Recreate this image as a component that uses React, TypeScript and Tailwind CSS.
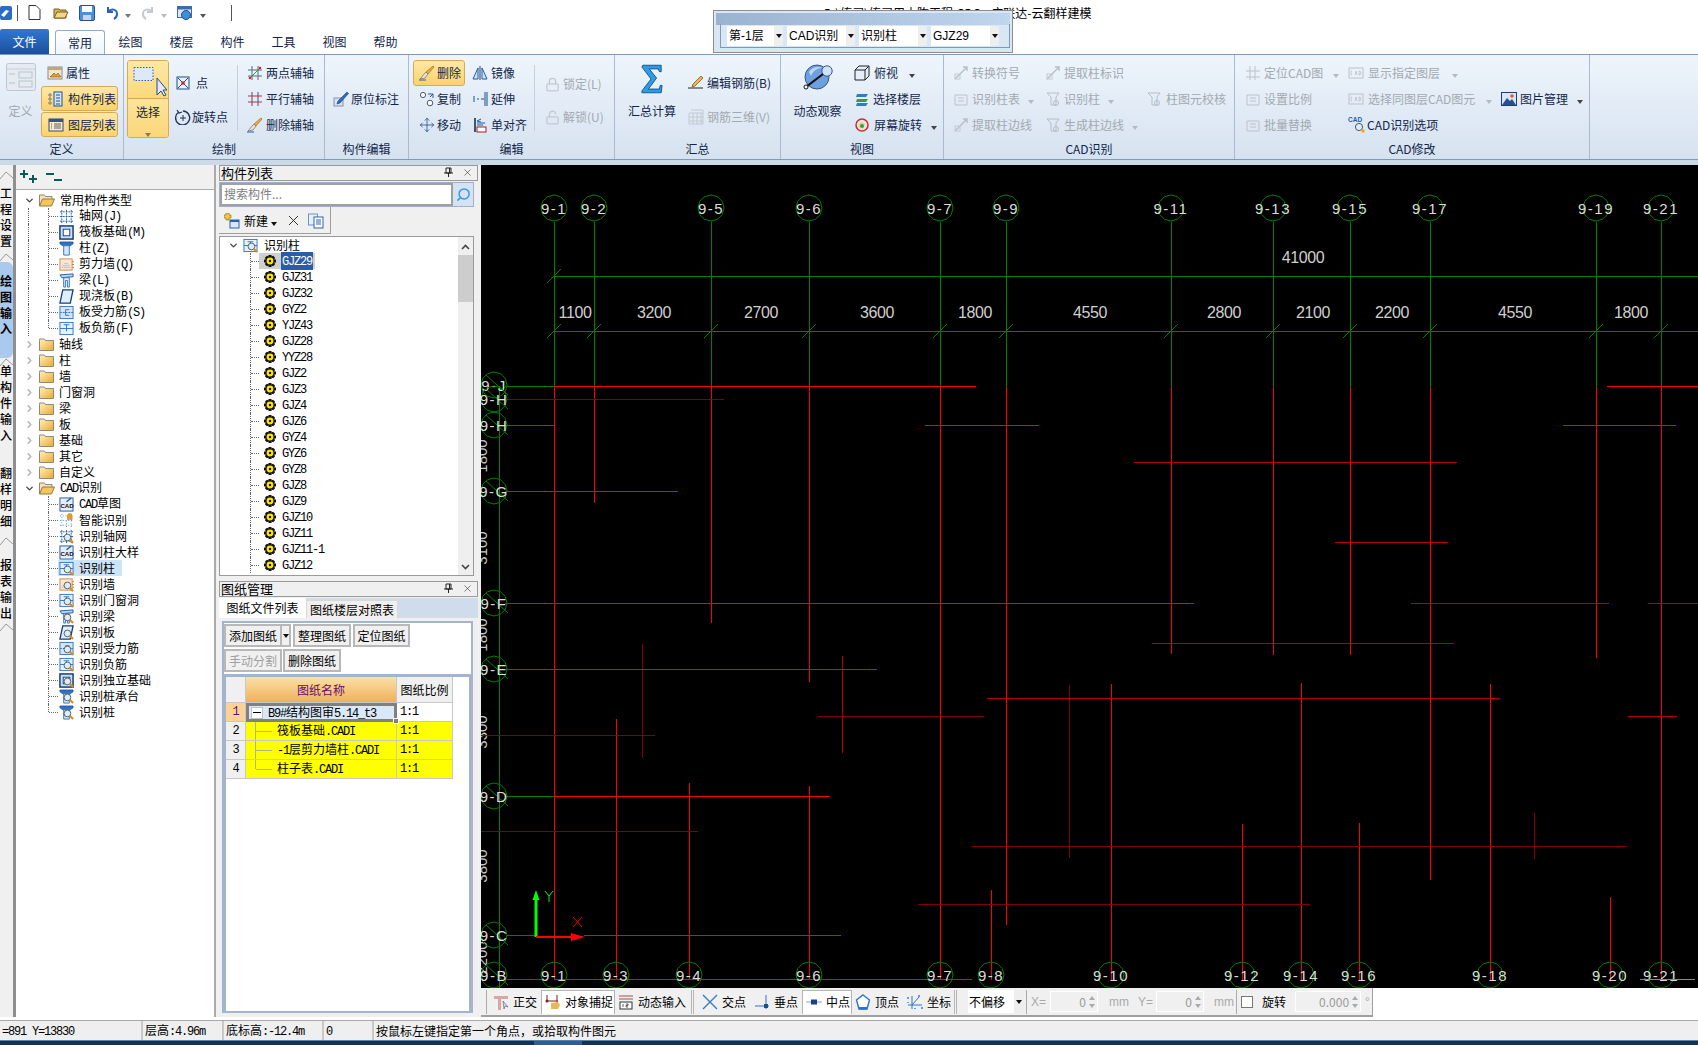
import type { ReactNode } from "react"
import { ChevronDown, ChevronRight, Lock, LockOpen, Move, Search, X } from "lucide-react"

const MONO = "font-['Liberation_Mono','Noto_Sans_CJK_SC',monospace] tracking-[-1.2px]"

function Sim({ text }: { text: string }) {
  const parts = text.split(/([\x00-\x7f]+)/).filter(Boolean)
  return (
    <span className="whitespace-nowrap">
      {parts.map((p, i) =>
        /^[\x00-\x7f]+$/.test(p) ? (
          <span key={i} className={MONO}>
            {p}
          </span>
        ) : (
          <span key={i}>{p}</span>
        ),
      )}
    </span>
  )
}

function Caret({ color = "border-t-[#444]" }: { color?: string }) {
  return <span className={`inline-block border-x-[3px] border-t-[4px] border-x-transparent ${color}`} />
}

function Ic({ s = 16, children }: { s?: number; children: ReactNode }) {
  return (
    <svg width={s} height={s} viewBox="0 0 16 16" fill="none" className="shrink-0">
      {children}
    </svg>
  )
}

/* ---------- ribbon icons ---------- */
const IProps = (
  <Ic>
    <rect x="1" y="2" width="14" height="12" fill="#f1e6cf" stroke="#8a8a8a" />
    <rect x="1" y="2" width="14" height="3" fill="#c9a56a" />
    <path d="M3 12l4-4 2 2 2-2 3 4z" fill="#e69a2e" stroke="#8a5a12" strokeWidth=".6" />
  </Ic>
)
const IList = (
  <Ic>
    <rect x="6" y="1" width="8" height="14" fill="#d4e4f7" stroke="#23518f" />
    <path d="M8 4h4M8 7h4M8 10h4M8 13h4" stroke="#23518f" />
    <path d="M1 3h2v2H1zM1 7h2v2H1zM1 11h2v2H1z" fill="#fff" stroke="#333" strokeWidth=".6" />
  </Ic>
)
const ILayer = (
  <Ic>
    <rect x="1" y="2" width="14" height="12" fill="#f8ecc4" stroke="#39496b" />
    <rect x="1" y="2" width="14" height="3" fill="#28569b" />
    <path d="M6 7h7M6 9h7M6 11h7M3 7h1M3 9h1M3 11h1" stroke="#56617a" />
  </Ic>
)
const IPoint = (
  <Ic>
    <rect x="2" y="2" width="12" height="12" fill="#e9f0f9" stroke="#1f4d8f" />
    <path d="M3 3l10 10M13 3L3 13" stroke="#1f4d8f" />
    <circle cx="8" cy="8" r="1.8" fill="#d32020" />
  </Ic>
)
const IRotatePt = (
  <Ic>
    <path d="M4 3a7 7 0 1 0 4-1" stroke="#1c3558" strokeWidth="1.4" />
    <path d="M2 1l2 3 3-1" stroke="#1c3558" strokeWidth="1.2" />
    <path d="M8 6v6M5 9h6" stroke="#1c3558" />
  </Ic>
)
const ITwoAxis = (
  <Ic>
    <path d="M5 1v14M11 1v14M1 5h14M1 11h14" stroke="#5b6b80" />
    <path d="M2 14L14 2" stroke="#2c9a35" />
    <circle cx="3" cy="13" r="1.3" fill="#c62a2a" />
    <circle cx="13" cy="3" r="1.3" fill="#c62a2a" />
  </Ic>
)
const IParallel = (
  <Ic>
    <path d="M5 1v14M11 1v14" stroke="#33548a" />
    <path d="M1 5h14M1 11h14" stroke="#c23030" />
  </Ic>
)
const IBrush = (
  <Ic>
    <path d="M14 1l1 1-6 7-2-2z" fill="#f0b23c" stroke="#8a5b10" strokeWidth=".6" />
    <path d="M7 7l2 2-3 4-5 1c2-2 3-4 6-7z" fill="#e8e4dc" stroke="#555" strokeWidth=".6" />
    <path d="M0 15h7" stroke="#2b5aa0" />
  </Ic>
)
const IAnno = (
  <Ic>
    <rect x="1" y="7" width="9" height="8" fill="#d7e3f2" stroke="#7f93ae" />
    <path d="M14 1l1.5 1.5L7 12l-3 1 1-3z" fill="#2f6dbb" stroke="#173c72" strokeWidth=".6" />
  </Ic>
)
const IMirror = (
  <Ic>
    <path d="M8 1v14" stroke="#1d3d6f" />
    <path d="M6 3v11H1z" fill="#d4e4f7" stroke="#1f5ba8" />
    <path d="M10 3v11h5z" fill="#d4e4f7" stroke="#1f5ba8" />
  </Ic>
)
const ICopy = (
  <Ic>
    <circle cx="4" cy="4" r="2.6" fill="#fff" stroke="#4c5a6e" />
    <circle cx="11" cy="12" r="2.8" fill="#fff" stroke="#4c5a6e" />
    <path d="M9 3h5v4M14 3l-3 3" stroke="#1f5ba8" />
  </Ic>
)
const IExtend = (
  <Ic>
    <path d="M13 1v14M15 1v14" stroke="#1f4d8f" />
    <path d="M1 8h2M5 8h2M9 8h3M1 6h2M1 10h2" stroke="#1f4d8f" />
  </Ic>
)
const IAlign = (
  <Ic>
    <path d="M3 1v14" stroke="#1a2c52" strokeWidth="1.6" />
    <rect x="5" y="10" width="9" height="5" fill="#fff" stroke="#a51c1c" />
    <path d="M5 6h8M5 8h6" stroke="#1f5ba8" />
    <path d="M9 2L5 4l4 1" stroke="#1f5ba8" />
  </Ic>
)
const ISelect = (
  <svg width="34" height="32" viewBox="0 0 34 32" className="shrink-0">
    <rect x="1" y="1.5" width="19" height="13" fill="#dce9f8" stroke="#2c5fae" strokeDasharray="1.5 1.5" />
    <path d="M24 12v17l4-4 3 5 2-1-3-5h4z" fill="#dfe9f7" stroke="#25488a" />
  </svg>
)
const IDefine = (
  <svg width="30" height="28" viewBox="0 0 30 28" className="shrink-0">
    <rect x=".5" y=".5" width="29" height="27" rx="2" fill="#e6ebf1" stroke="#c0c6ce" />
    <path d="M1 6h28" stroke="#c8ced6" />
    <path d="M3 11h6M3 20h6" stroke="#bcc3cc" />
    <rect x="13" y="9" width="13" height="6" fill="none" stroke="#bcc3cc" />
    <rect x="13" y="18" width="13" height="6" fill="none" stroke="#bcc3cc" />
  </svg>
)
const ISigma = (
  <svg width="22" height="30" viewBox="0 0 24 32" className="shrink-0">
    <path d="M2 1h20v7h-2l-1-3H9l8 10-9 12h12l1-4h2l-1 8H1v-2l10-13L1 3z" fill="#2f9be0" stroke="#0f4f94" strokeWidth="1" />
  </svg>
)
const IEditBar = (
  <Ic>
    <path d="M0 13h15" stroke="#222" />
    <path d="M13 1l2 2-8 8-3 1 1-3z" fill="#efb74c" stroke="#6b4a14" strokeWidth=".7" />
  </Ic>
)
const IRebar3d = (
  <Ic>
    <path d="M1 4h14v11H1zM1 8h14M1 12h14M5 4v11M9 4v11M13 4v11M3 1h12v3" stroke="#bfc6cf" strokeWidth=".9" />
  </Ic>
)
const IOrbit = (
  <svg width="30" height="28" viewBox="0 0 30 28" className="shrink-0">
    <circle cx="14" cy="14" r="12" fill="#6f9fdc" stroke="#31578f" />
    <path d="M6 9c3-5 9-6 13-4-5 0-9 3-11 8z" fill="#bcd6f4" />
    <circle cx="24" cy="8" r="5.2" fill="#cfe2f7" stroke="#31578f" />
    <path d="M3 24L20 11" stroke="#111" strokeWidth="2.2" />
    <circle cx="3" cy="24" r="2" fill="#fff" stroke="#111" />
  </svg>
)
const ICube = (
  <Ic>
    <path d="M1 5l4-4h10v10l-4 4H1zM1 5h10v10M11 5l4-4" fill="#e5eef9" stroke="#222" />
  </Ic>
)
const IFloors = (
  <Ic>
    <path d="M3 3h11L12 6H2z" fill="#2f7dc0" />
    <path d="M3 8h11l-2 3H2z" fill="#2e9e5b" />
    <path d="M3 12h11l-2 3H2z" fill="#2f7dc0" />
  </Ic>
)
const IScreenRot = (
  <Ic>
    <circle cx="8" cy="8" r="6" stroke="#d42a2a" strokeWidth="1.5" />
    <path d="M4 9l3-4 4 2-2 5z" fill="#f0d24a" />
    <circle cx="8" cy="9" r="2" fill="#3aa34a" />
  </Ic>
)
const GraySquare = (
  <Ic>
    <path d="M2 14L14 2M10 2h4v4" stroke="#b7bdc6" strokeWidth="1.4" />
    <rect x="2" y="9" width="5" height="5" stroke="#c4cad2" />
  </Ic>
)
const GrayCol = (
  <Ic>
    <path d="M2 2h12l-3 4v8H6V6z" stroke="#b7bdc6" />
    <circle cx="11" cy="12" r="2.5" stroke="#b7bdc6" />
  </Ic>
)
const GrayDoc = (
  <Ic>
    <path d="M2 4h12v10H2zM5 7h6M5 10h6" stroke="#bcc2ca" />
  </Ic>
)
const GrayCad = (
  <Ic>
    <rect x="1" y="3" width="14" height="10" stroke="#bcc2ca" />
    <path d="M4 6H3v4h1M7 10l1-4 1 4M11 6h1l1 2-1 2h-1z" stroke="#bcc2ca" strokeWidth=".8" />
  </Ic>
)
const IPicture = (
  <Ic>
    <rect x=".5" y="1.5" width="15" height="13" fill="#dbe6f3" stroke="#1d3f72" />
    <path d="M1 14l5-7 3 3 2-2 4 6z" fill="#27508f" />
    <circle cx="11" cy="5" r="1.8" fill="#e25a2a" />
  </Ic>
)
const ICadGlass = (
  <svg width="18" height="18" viewBox="0 0 18 18" className="shrink-0">
    <text x="0" y="6" fontSize="6.5" fontWeight="700" fill="#1f5ba8" fontFamily="Liberation Sans">
      CAD
    </text>
    <circle cx="11" cy="11" r="3.6" fill="#d7effa" stroke="#555" />
    <rect x="13.5" y="13.5" width="3" height="3" fill="#f2a31b" />
  </svg>
)
const ITwoAxisGray = (
  <Ic>
    <path d="M5 1v14M10 1v14M1 6h14M1 12h14" stroke="#bcc2ca" />
  </Ic>
)

/* ---------- ribbon pieces ---------- */
function RItem({
  icon,
  label,
  off,
  arrow,
  gap = "gap-[3px]",
}: {
  icon: ReactNode
  label: string
  off?: boolean
  arrow?: string
  gap?: string
}) {
  return (
    <div className={`flex h-[26px] items-center ${gap} whitespace-nowrap ${off ? "text-[#a3a9b1]" : "text-[#12264a]"}`}>
      {icon}
      <span>{label}</span>
      {arrow && (
        <span className={arrow}>
          <Caret color={off ? "border-t-[#b5bac1]" : "border-t-[#444]"} />
        </span>
      )}
    </div>
  )
}

function Group({ w, label, children, grow }: { w?: string; label: string; children: ReactNode; grow?: boolean }) {
  return (
    <div className={`flex flex-col ${w ?? ""} ${grow ? "" : "border-r border-[#a8bbd2]"} shrink-0`}>
      <div className="flex h-[85px] pt-[5px]">{children}</div>
      <div className="h-[19px] text-center leading-[17px] text-[#12264a]">{label}</div>
    </div>
  )
}

function OrangeBtn({ icon, label }: { icon: ReactNode; label: string }) {
  return (
    <div className="flex h-[25px] w-[77px] items-center gap-[4px] rounded-[3px] border border-[#d8ab51] bg-gradient-to-b from-[#fee8a6] to-[#fbd26c] pl-[6px] text-[#12264a]">
      {icon}
      <span>{label}</span>
    </div>
  )
}

function Sep() {
  return <div className="mt-[5px] h-[66px] w-px shrink-0 bg-[#c3d0df]" />
}

function Ribbon() {
  return (
    <div className="flex h-[106px] shrink-0 border-y border-[#7f9bb9] bg-gradient-to-b from-[#eef5fc] to-[#d6e2f0] text-[12px]">
      <Group w="w-[124px]" label="定义">
        <div className="flex w-[41px] flex-col items-center pt-[3px] text-[#a3a9b1]">
          {IDefine}
          <span className="mt-[11px]">定义</span>
        </div>
        <div className="flex flex-col">
          <div className="pl-[6px]">
            <RItem icon={IProps} label="属性" />
          </div>
          <OrangeBtn icon={IList} label="构件列表" />
          <div className="mt-px">
            <OrangeBtn icon={ILayer} label="图层列表" />
          </div>
        </div>
      </Group>

      <Group w="w-[201px]" label="绘制">
        <div className="ml-[3px] flex h-[78px] w-[42px] flex-col overflow-hidden rounded-[3px] border border-[#d8ab51] text-[#12264a]">
          <div className="flex h-[41px] items-start justify-center bg-gradient-to-b from-[#fee8a6] to-[#fcd87a] pt-[5px] pl-[4px]">{ISelect}</div>
          <div className="flex flex-1 flex-col items-center border-t border-[#d8ab51] bg-gradient-to-b from-[#fde39b] to-[#fbd575]">
            <span className="mt-[4px]">选择</span>
            <span className="mt-[2px]">
              <Caret color="border-t-[#8a7a50]" />
            </span>
          </div>
        </div>
        <div className="ml-[6px] flex w-[62px] flex-col gap-[8px] pt-[10px]">
          <RItem icon={IPoint} label="点" gap="gap-[5px]" />
          <RItem icon={IRotatePt} label="旋转点" gap="gap-px" />
        </div>
        <Sep />
        <div className="ml-[9px] flex flex-col">
          <RItem icon={ITwoAxis} label="两点辅轴" />
          <RItem icon={IParallel} label="平行辅轴" />
          <RItem icon={IBrush} label="删除辅轴" />
        </div>
      </Group>

      <Group w="w-[84px]" label="构件编辑">
        <div className="ml-[8px] pt-[26px]">
          <RItem icon={IAnno} label="原位标注" gap="gap-[2px]" />
        </div>
      </Group>

      <Group w="w-[206px]" label="编辑">
        <div className="ml-[4px] flex w-[52px] flex-col">
          <div className="flex h-[26px] items-center gap-[2px] rounded-[3px] border border-[#d8ab51] bg-gradient-to-b from-[#fee8a6] to-[#fbd26c] pl-[5px] text-[#12264a]">
            {IBrush}
            <span>删除</span>
          </div>
          <div className="pl-[6px]">
            <RItem icon={ICopy} label="复制" gap="gap-[2px]" />
            <RItem icon={<Move size={16} strokeWidth={1.2} className="shrink-0 text-[#1f4d8f]" />} label="移动" gap="gap-[2px]" />
          </div>
        </div>
        <div className="ml-[7px] flex w-[62px] flex-col">
          <RItem icon={IMirror} label="镜像" />
          <RItem icon={IExtend} label="延伸" />
          <RItem icon={IAlign} label="单对齐" />
        </div>
        <Sep />
        <div className="ml-[10px] flex flex-col gap-[7px] pt-[11px]">
          <RItem off icon={<Lock size={15} className="shrink-0 text-[#c4c9d0]" />} label="锁定(L)" />
          <RItem off icon={<LockOpen size={15} className="shrink-0 text-[#c4c9d0]" />} label="解锁(U)" />
        </div>
      </Group>

      <Group w="w-[166px]" label="汇总">
        <div className="ml-[9px] flex w-[56px] flex-col items-center pt-[4px] text-[#12264a]">
          {ISigma}
          <span className="mt-[8px]">汇总计算</span>
        </div>
        <div className="ml-[8px] flex flex-col gap-[8px] pt-[10px]">
          <RItem icon={IEditBar} label="编辑钢筋(B)" />
          <RItem off icon={IRebar3d} label="钢筋三维(V)" />
        </div>
      </Group>

      <Group w="w-[163px]" label="视图">
        <div className="ml-[9px] flex w-[55px] flex-col items-center pt-[3px] text-[#12264a]">
          {IOrbit}
          <span className="mt-[11px]">动态观察</span>
        </div>
        <div className="ml-[9px] flex flex-col">
          <RItem icon={ICube} label="俯视" arrow="ml-[7px]" gap="gap-[4px]" />
          <RItem icon={IFloors} label="选择楼层" gap="gap-[3px]" />
          <RItem icon={IScreenRot} label="屏幕旋转" arrow="ml-[5px]" gap="gap-[4px]" />
        </div>
      </Group>

      <Group w="w-[291px]" label="CAD识别">
        <div className="ml-[9px] flex w-[92px] flex-col">
          <RItem off icon={GraySquare} label="转换符号" />
          <RItem off icon={GrayDoc} label="识别柱表" arrow="ml-[5px]" />
          <RItem off icon={GraySquare} label="提取柱边线" />
        </div>
        <div className="flex w-[101px] flex-col">
          <RItem off icon={GraySquare} label="提取柱标识" />
          <RItem off icon={GrayCol} label="识别柱" arrow="ml-[5px]" />
          <RItem off icon={GrayCol} label="生成柱边线" arrow="ml-[5px]" />
        </div>
        <div className="pt-[26px]">
          <RItem off icon={GrayCol} label="柱图元校核" gap="gap-[4px]" />
        </div>
      </Group>

      <Group w="w-[355px]" label="CAD修改">
        <div className="ml-[10px] flex w-[103px] flex-col">
          <RItem off icon={ITwoAxisGray} label="定位CAD图" arrow="ml-[7px]" />
          <RItem off icon={GrayDoc} label="设置比例" />
          <RItem off icon={GrayDoc} label="批量替换" />
        </div>
        <div className="flex w-[153px] flex-col">
          <RItem off icon={GrayCad} label="显示指定图层" arrow="ml-[8px]" gap="gap-[4px]" />
          <RItem off icon={GrayCad} label="选择同图层CAD图元" arrow="ml-[7px]" gap="gap-[4px]" />
          <RItem icon={ICadGlass} label="CAD识别选项" gap="gap-[1px]" />
        </div>
        <div className="pt-[26px]">
          <RItem icon={IPicture} label="图片管理" arrow="ml-[6px]" gap="gap-[3px]" />
        </div>
      </Group>
      <div className="flex-1" />
    </div>
  )
}

function TitleBar() {
  return (
    <div className="flex h-[29px] shrink-0 items-center bg-white pb-[4px] text-[12px] text-black">
      <div className="flex w-[232px] shrink-0 items-center">
        <svg width="12" height="14" viewBox="0 0 12 14">
          <rect width="12" height="14" rx="2" fill="#2b6cc4" />
          <path d="M1 9l5-5 3 1-5 6z" fill="#fff" />
        </svg>
        <div className="ml-[5px] h-[16px] w-px bg-[#555]" />
        <div className="ml-[9px] flex w-[15px] justify-center">
          <svg width="13" height="15" viewBox="0 0 13 15">
            <path d="M1 .5h7l4 4v10H1z" fill="#fff" stroke="#333" />
          </svg>
        </div>
        <div className="ml-[11px]">
          <svg width="16" height="15" viewBox="0 0 16 15">
            <path d="M1 4h5l1 1h6v8H1z" fill="#d9b25a" stroke="#7c5d1e" />
            <path d="M1 13l3-6h11l-3 6z" fill="#f4d68a" stroke="#7c5d1e" />
          </svg>
        </div>
        <div className="ml-[10px]">
          <svg width="16" height="16" viewBox="0 0 16 16">
            <rect x=".5" y=".5" width="15" height="15" rx="1.5" fill="#4f8fd6" stroke="#27528c" />
            <rect x="3" y="1" width="10" height="6" fill="#fff" />
            <rect x="4" y="10" width="8" height="5" fill="#c9d6e6" />
          </svg>
        </div>
        <div className="ml-[10px]">
          <svg width="14" height="14" viewBox="0 0 14 14" fill="none">
            <path d="M3 1v5h5M3 6c3-4 9-3 9 2 0 2-1 4-3 5" stroke="#2a63b5" strokeWidth="2" />
          </svg>
        </div>
        <span className="ml-[6px]">
          <Caret color="border-t-[#777]" />
        </span>
        <div className="ml-[10px]">
          <svg width="14" height="14" viewBox="0 0 14 14" fill="none">
            <path d="M11 1v5H6M11 6C8 2 2 3 2 8c0 2 1 4 3 5" stroke="#c4cad1" strokeWidth="2" />
          </svg>
        </div>
        <span className="ml-[6px]">
          <Caret color="border-t-[#bbb]" />
        </span>
        <div className="ml-[10px]">
          <svg width="17" height="16" viewBox="0 0 17 16">
            <rect x=".5" y="1.5" width="14" height="11" fill="#dbe8f7" stroke="#3f6ca8" />
            <rect x=".5" y="1.5" width="14" height="3" fill="#3f6ca8" />
            <circle cx="9" cy="10" r="4.5" fill="#3f8ed6" stroke="#1d4f8e" />
          </svg>
        </div>
        <span className="ml-[6px]">
          <Caret color="border-t-[#555]" />
        </span>
        <div className="ml-auto h-[16px] w-px bg-[#555]" />
      </div>
      <div className="ml-[592px] whitespace-nowrap">D:\练习\练习用土陈工程.GDQ - 广联达-云翻样建模</div>
    </div>
  )
}

function Tabs() {
  const names = ["绘图", "楼层", "构件", "工具", "视图", "帮助"]
  return (
    <div className="flex h-[25px] shrink-0 items-end bg-white text-[12px] text-[#12264a]">
      <div className="flex h-[25px] w-[49px] items-center justify-center rounded-t-[2px] bg-gradient-to-b from-[#2f78d2] to-[#1d4f9d] text-white">文件</div>
      <div className="ml-[6px] flex h-[24px] w-[50px] items-center justify-center rounded-t-[3px] border-x border-t border-[#92acc8] bg-gradient-to-b from-white to-[#eef5fc]">常用</div>
      {names.map((n) => (
        <div key={n} className="flex h-[24px] w-[51px] items-center justify-center">
          {n}
        </div>
      ))}
    </div>
  )
}

/* ---------- tree icons ---------- */
const FolderClosed = (
  <svg width="15" height="13" viewBox="0 0 15 13" className="shrink-0">
    <defs>
      <linearGradient id="fold" x1="0" y1="0" x2="1" y2="1">
        <stop offset="0" stopColor="#fff3c0" />
        <stop offset="1" stopColor="#eda92c" />
      </linearGradient>
    </defs>
    <path d="M.5 2.5V1h5l1 1.5h8v10H.5z" fill="url(#fold)" stroke="#8a8a80" />
  </svg>
)
const FolderOpen = (
  <svg width="16" height="13" viewBox="0 0 16 13" className="shrink-0">
    <path d="M.5 12V1h5l1 1.5H13V5" fill="#f6e6b6" stroke="#8a8a80" />
    <path d="M.5 12l3-7h12l-3 7z" fill="#f6c65b" stroke="#8a7a50" />
  </svg>
)
const Blue = "#1f58a6"
const TreeGlyph: Record<string, ReactNode> = {
  grid: <path d="M1 3h14M1 8h14M1 13h14M3 1v14M8 1v14M13 1v14" stroke={Blue} strokeDasharray="2 1" />,
  raft: (
    <>
      <rect x="1" y="1" width="14" height="14" fill="#cfe0f5" stroke="#123f80" strokeWidth="1.6" />
      <rect x="4.5" y="4.5" width="7" height="7" fill="#fff" stroke="#123f80" />
    </>
  ),
  col: (
    <>
      <path d="M1 1h14v2l-3 2H4L1 3z" fill="#2f74c8" stroke="#123f80" strokeWidth=".7" />
      <path d="M5 5h6v10H5z" fill="#d8e7f8" stroke="#2f74c8" />
    </>
  ),
  wall: (
    <>
      <rect x="1" y="2" width="13" height="12" fill="#f3e7d9" stroke="#d48a4a" />
      <path d="M3 11h9M4 9h7M6 7h4" stroke="#9a9a9a" strokeDasharray="1 1" />
      <path d="M14 5h2M14 8h2M14 11h2" stroke="#d47a2a" />
    </>
  ),
  beam: (
    <>
      <path d="M1 2l14-1v3L3 5z" fill="#bcd6f4" stroke={Blue} />
      <path d="M5 5h6v10H9V8H7v7H5z" fill="#e5f0fb" stroke="#2f74c8" />
    </>
  ),
  slab: <path d="M4 1h11l-3 14H1z" fill="#e3eefb" stroke="#123f80" strokeWidth="1.4" />,
  rebar: (
    <>
      <rect x="1" y="1.5" width="14" height="13" fill="#d5e5f8" stroke="#2f74c8" />
      <path d="M1 8h14" stroke="#2f74c8" strokeDasharray="2 1" />
      <path d="M11 5H7v6h4" stroke="#2f74c8" />
    </>
  ),
  neg: (
    <>
      <rect x="1" y="1.5" width="14" height="13" fill="#e8f0fa" stroke="#2f74c8" />
      <path d="M1 8h14M8 4v7M5 4h6" stroke="#2f74c8" />
    </>
  ),
  cad: (
    <>
      <rect x="1" y="1" width="14" height="14" fill="#e5eefa" stroke={Blue} />
      <text x="1.5" y="12" fontSize="6.5" fontWeight="700" fill="#111" fontFamily="Liberation Sans">
        CAD
      </text>
      <path d="M8 5l5-4" stroke={Blue} strokeWidth="1.4" />
    </>
  ),
  magnet: (
    <>
      <path d="M1 3h7M1 8h14M1 13h14M3 1v14M8 8v7M13 8v7" stroke="#4c86cf" strokeDasharray="1 2" />
      <path d="M9 7V3a2.5 2.5 0 0 1 5 0v4h-2V3.5a.6.6 0 0 0-1 0V7z" fill="#f2a31b" stroke="#9a5d08" strokeWidth=".5" />
    </>
  ),
}

function Glass() {
  return (
    <>
      <circle cx="9" cy="9" r="3.6" fill="#d9eefa" stroke="#5a5a5a" />
      <path d="M11.5 11.5L15 15" stroke="#d98a1c" strokeWidth="2.2" />
    </>
  )
}

const TreeIcon = ({ k, glass }: { k: string; glass?: boolean }) => (
  <svg width="15" height="15" viewBox="0 0 16 16" fill="none" className="shrink-0">
    {TreeGlyph[k]}
    {glass && <Glass />}
  </svg>
)

function Dot({ h = "h-full", self = "" }: { h?: string; self?: string }) {
  return <span className={`${h} ${self} w-0 border-l border-dotted border-[#666]`} />
}

function ParentRow({ label, open, line }: { label: string; open?: boolean; line?: boolean }) {
  return (
    <div className="relative flex h-4 items-center pl-[8px] text-black">
      {open ? <ChevronDown size={11} strokeWidth={3} className="shrink-0 text-[#444]" /> : <ChevronRight size={11} strokeWidth={3} className="shrink-0 text-[#b0b0b0]" />}
      <span className="ml-[4px]">{open ? FolderOpen : FolderClosed}</span>
      <span className="ml-[5px]">
        <Sim text={label} />
      </span>
      {line && <span className="absolute top-[12px] left-[13px] h-[5px] border-l border-dotted border-[#666]" />}
    </div>
  )
}

function ChildRow({ k, glass, label, outer, last, sel }: { k: string; glass?: boolean; label: string; outer?: boolean; last?: boolean; sel?: boolean }) {
  return (
    <div className="flex h-4 items-center text-black">
      <span className="flex h-full w-[13px] justify-end">{outer && <Dot />}</span>
      <span className="w-[19px]" />
      {last ? <Dot h="h-1/2" self="self-start" /> : <Dot />}
      <span className="w-[9px] border-t border-dotted border-[#666]" />
      <span className={`flex h-full items-center ${sel ? "w-[64px] bg-[#cce4f7] pl-[1px]" : "pl-[1px]"}`}>
        <TreeIcon k={k} glass={glass} />
        <span className="ml-[5px]">
          <Sim text={label} />
        </span>
      </span>
    </div>
  )
}

function TreePanel() {
  const common: [string, string][] = [
    ["grid", "轴网(J)"],
    ["raft", "筏板基础(M)"],
    ["col", "柱(Z)"],
    ["wall", "剪力墙(Q)"],
    ["beam", "梁(L)"],
    ["slab", "现浇板(B)"],
    ["rebar", "板受力筋(S)"],
    ["neg", "板负筋(F)"],
  ]
  const cad: [string, string, boolean][] = [
    ["cad", "CAD草图", false],
    ["magnet", "智能识别", false],
    ["grid", "识别轴网", true],
    ["cad", "识别柱大样", false],
    ["neg", "识别柱", true],
    ["wall", "识别墙", true],
    ["neg", "识别门窗洞", true],
    ["beam", "识别梁", true],
    ["slab", "识别板", true],
    ["rebar", "识别受力筋", true],
    ["neg", "识别负筋", true],
    ["raft", "识别独立基础", true],
    ["col", "识别桩承台", true],
    ["col", "识别桩", true],
  ]
  const folders = ["轴线", "柱", "墙", "门窗洞", "梁", "板", "基础", "其它", "自定义"]
  return (
    <div className="flex h-full w-[200px] shrink-0 flex-col border-r-2 border-[#aaa] bg-white text-[12px]">
      <div className="flex h-[25px] shrink-0 items-center gap-[8px] border-b border-[#aaa] bg-[#f0f0f0] pl-[4px]">
        <svg width="18" height="14" viewBox="0 0 18 14" fill="none">
          <path d="M4 0v8M0 4h8M13 5v8M9 9h8" stroke="#0a5a5a" strokeWidth="2" />
        </svg>
        <svg width="16" height="10" viewBox="0 0 16 10" fill="none">
          <path d="M0 2h8M8 8h8" stroke="#0a5a5a" strokeWidth="2" />
        </svg>
      </div>
      <div className="pt-[2px]">
        <ParentRow label="常用构件类型" open />
        {common.map(([k, l], i) => (
          <ChildRow key={l} k={k} label={l} outer last={i === common.length - 1} />
        ))}
        {folders.map((f) => (
          <ParentRow key={f} label={f} />
        ))}
        <ParentRow label="CAD识别" open />
        {cad.map(([k, l, g], i) => (
          <ChildRow key={l} k={k} label={l} glass={g} last={i === cad.length - 1} sel={l === "识别柱"} />
        ))}
      </div>
    </div>
  )
}

/* ---------- component list ---------- */
function PaneHead({ title }: { title: string }) {
  return (
    <div className="flex h-[16px] shrink-0 items-center border border-[#9a9a9a] bg-[#f0f0f0] pb-[2px] text-[13px] leading-none text-black">
      <span className="flex-1 pl-px">{title}</span>
      <svg width="9" height="10" viewBox="0 0 9 10" className="mr-[9px]" fill="none">
        <path d="M2 1h5v5H2zM0 6h9M4.5 6v4M5.5 1v5" stroke="#222" />
      </svg>
      <X size={11} strokeWidth={1.3} className="mr-[4px] text-[#333]" />
    </div>
  )
}

const Gear = (
  <svg width="12" height="12" viewBox="0 0 12 12" className="shrink-0">
    <path d="M4.5 0h3v1.6l1.6-.9 2 2-.9 1.8H12v3h-1.8l.9 1.8-2 2-1.6-.9V12h-3v-1.6l-1.6.9-2-2 .9-1.8H0v-3h1.8L.9 2.7l2-2 1.6.9z" fill="#111" />
    <circle cx="6" cy="6" r="3.4" fill="#ffe600" />
    <circle cx="6" cy="6" r="1.2" fill="#111" />
  </svg>
)

function ComponentList() {
  const rows = ["GJZ29", "GJZ31", "GJZ32", "GYZ2", "YJZ43", "GJZ28", "YYZ28", "GJZ2", "GJZ3", "GJZ4", "GJZ6", "GYZ4", "GYZ6", "GYZ8", "GJZ8", "GJZ9", "GJZ10", "GJZ11", "GJZ11-1", "GJZ12"]
  return (
    <>
      <PaneHead title="构件列表" />
      <div className="mt-px flex h-[25px] w-[255px] shrink-0 border border-[#9db1c8]">
        <div className="flex-1 border-2 border-[#a0a0a0] bg-white pl-[2px] leading-[17px] text-[#808080]">搜索构件...</div>
        <div className="flex w-[20px] items-center justify-center bg-[#d3e3f4]">
          <Search size={15} strokeWidth={2.4} className="-scale-x-100 text-[#3d96e0]" />
        </div>
      </div>
      <div className="flex h-[27px] w-[112px] shrink-0 items-center border-r border-b border-[#a0a0a0] bg-[#f0f0f0] pt-px pl-[5px] text-black">
        <svg width="16" height="16" viewBox="0 0 16 16">
          <path d="M2 0h3v2h2v3H5v2H2V5H0V2h2z" fill="#f2c83c" stroke="#8a6a10" strokeWidth=".6" />
          <rect x="6" y="7" width="9" height="8" fill="#d9e7f7" stroke="#2a62ad" />
          <rect x="6" y="7" width="9" height="2" fill="#2a62ad" />
        </svg>
        <span className="ml-[4px]">新建</span>
        <span className="ml-[3px]">
          <Caret color="border-t-[#111]" />
        </span>
        <X size={17} strokeWidth={1.4} className="ml-[8px] text-[#333]" />
        <svg width="16" height="16" viewBox="0 0 16 16" className="ml-[6px]">
          <rect x=".5" y="1" width="9" height="11" fill="#e6f0fb" stroke="#6b93c6" />
          <rect x="6" y="4" width="9" height="11" fill="#fff" stroke="#2a62ad" />
          <path d="M8 7h5M8 9h5M8 11h5" stroke="#2a62ad" />
        </svg>
      </div>
      <div className="mt-[2px] flex h-[340px] w-[255px] shrink-0 border border-[#9a9a9a] bg-white">
        <div className="flex-1 overflow-hidden">
          <div className="flex h-4 items-center pl-[8px] text-black">
            <ChevronDown size={11} strokeWidth={3} className="shrink-0 text-[#444]" />
            <span className="ml-[4px]">
              <TreeIcon k="neg" glass />
            </span>
            <span className="ml-[6px]">识别柱</span>
          </div>
          {rows.map((r, i) => (
            <div key={r} className="flex h-4 items-center text-black">
              <span className="w-[30px]" />
              <Dot />
              <span className="w-[8px] border-t border-dotted border-[#666]" />
              <span className={`flex h-full items-center pl-[5px] ${i === 0 ? "bg-[#cfcfcf] pr-[2px]" : ""}`}>
                {Gear}
                <span className={`ml-[5px] px-[1px] leading-4 ${i === 0 ? "bg-[#2a5ca8] text-white" : ""}`}>
                  <Sim text={r} />
                </span>
              </span>
            </div>
          ))}
        </div>
        <div className="flex w-[15px] shrink-0 flex-col items-center bg-[#efefef]">
          <svg width="9" height="6" viewBox="0 0 9 6" fill="none" className="mt-[7px]">
            <path d="M1 5l3.5-3.5L8 5" stroke="#444" strokeWidth="1.6" />
          </svg>
          <div className="mt-[5px] h-[47px] w-full bg-[#cdcdcd]" />
          <svg width="9" height="6" viewBox="0 0 9 6" fill="none" className="mt-auto mb-[5px]">
            <path d="M1 1l3.5 3.5L8 1" stroke="#444" strokeWidth="1.6" />
          </svg>
        </div>
      </div>
    </>
  )
}

/* ---------- drawing manager ---------- */
function GrayBtn({ w, children, off }: { w: string; children: ReactNode; off?: boolean }) {
  return <div className={`flex h-[23px] ${w} shrink-0 items-center justify-center border-2 border-[#b8b8b8] bg-[#f0f0f0] ${off ? "text-[#a0a0a0]" : "text-black"}`}>{children}</div>
}

function DrawingRow({ n, name, last }: { n: number; name: string; last?: boolean }) {
  return (
    <div className="flex h-[19px] text-black">
      <div className="flex w-[20px] items-center justify-center border-r border-b border-[#c8c8c8] bg-[#f0f0f0]">
        <span className={MONO}>{n}</span>
      </div>
      <div className="flex w-[151px] items-center border-r border-b border-[#c8c8c8] bg-[#ffff00]">
        <span className={`ml-[9px] w-0 border-l border-[#b4b48c] ${last ? "h-1/2 self-start" : "self-stretch"}`} />
        <span className="w-[16px] border-t border-[#b4b48c]" />
        <span className="ml-[5px]">
          <Sim text={name} />
        </span>
      </div>
      <div className="flex w-[56px] items-center border-r border-b border-[#c8c8c8] bg-[#ffff00] pl-[3px]">
        <span className={MONO}>1:1</span>
      </div>
    </div>
  )
}

function DrawingManager() {
  return (
    <>
      <div className="mt-[5px]">
        <PaneHead title="图纸管理" />
      </div>
      <div className="mt-px flex h-[20px] shrink-0 items-end bg-[#cfdcec] text-black">
        <div className="flex h-[20px] w-[87px] items-center justify-center bg-white">图纸文件列表</div>
        <div className="flex h-[18px] w-[92px] items-center justify-center border-x border-t border-[#d8d8d8] bg-[#efefef]">图纸楼层对照表</div>
      </div>
      <div className="mt-[3px] mr-[5px] ml-[3px] flex min-h-0 flex-1 flex-col border-2 border-[#a3b4cc] bg-white">
        <div className="flex gap-[2px] pt-px">
          <div className="flex">
            <GrayBtn w="w-[58px]">添加图纸</GrayBtn>
            <div className="flex h-[23px] w-[9px] items-center justify-center border-y-2 border-r-2 border-[#b8b8b8] bg-[#f0f0f0]">
              <Caret color="border-t-[#111]" />
            </div>
          </div>
          <GrayBtn w="w-[58px]">整理图纸</GrayBtn>
          <GrayBtn w="w-[57px]">定位图纸</GrayBtn>
        </div>
        <div className="mt-[2px] flex gap-[1px]">
          <GrayBtn w="w-[58px]" off>
            手动分割
          </GrayBtn>
          <GrayBtn w="w-[58px]">删除图纸</GrayBtn>
        </div>
        <div className="mt-[2px] flex-1 border-2 border-t-[3px] border-[#a3b4cc] border-b-0">
          <div className="flex h-[26px]">
            <div className="w-[20px] border-r border-b border-[#c8c8c8] bg-[#f0f0f0]" />
            <div className="flex w-[151px] items-center justify-center border-r border-b border-[#c8c8c8] bg-gradient-to-b from-[#fadfa8] to-[#f0b158] text-[#6a0a72]">图纸名称</div>
            <div className="flex w-[56px] items-center justify-center border-r border-b border-[#c8c8c8] bg-[#f0f0f0] text-black">图纸比例</div>
          </div>
          <div className="flex h-[19px] text-black">
            <div className="flex w-[20px] items-center justify-center border-r border-b border-[#c8c8c8] bg-[#fbd294] text-[#6a0a72]">
              <span className={MONO}>1</span>
            </div>
            <div className="relative flex w-[151px] items-center border-[3px] border-[#808080] bg-[#d9e9f8]">
              <span className="ml-[2px] flex h-[12px] w-[12px] items-center justify-center border border-[#b8c4d0] bg-white">
                <span className="h-px w-[8px] bg-black" />
              </span>
              <span className="ml-[5px]">
                <Sim text="B9#结构图审5.14_t3" />
              </span>
              <span className="absolute -right-[5px] -bottom-[5px] h-[6px] w-[6px] border border-white bg-[#808080]" />
            </div>
            <div className="flex w-[56px] items-center border-r border-b border-[#c8c8c8] bg-white pl-[3px]">
              <span className={MONO}>1:1</span>
            </div>
          </div>
          <DrawingRow n={2} name="筏板基础.CADI" />
          <DrawingRow n={3} name="-1层剪力墙柱.CADI" />
          <DrawingRow n={4} name="柱子表.CADI" last />
        </div>
      </div>
      <div className="h-[4px] shrink-0" />
    </>
  )
}

/* ---------- canvas ---------- */
type Seg = [number, number, number, number, number?]
const GREEN = "#008000"
const shades = ["#ff0000", "#b80000", "#820000"]
const TOP: [string, number][] = [
  ["9-1", 554],
  ["9-2", 594],
  ["9-5", 711],
  ["9-6", 809],
  ["9-7", 940],
  ["9-9", 1006],
  ["9-11", 1171],
  ["9-13", 1273],
  ["9-15", 1350],
  ["9-17", 1430],
  ["9-19", 1596],
  ["9-21", 1661],
]
const BOTTOM: [string, number][] = [
  ["9-1", 554],
  ["9-3", 616],
  ["9-4", 689],
  ["9-6", 809],
  ["9-7", 940],
  ["9-8", 991],
  ["9-10", 1111],
  ["9-12", 1242],
  ["9-14", 1301],
  ["9-16", 1359],
  ["9-18", 1490],
  ["9-20", 1610],
  ["9-21", 1661],
]
const LEFT: [string, number][] = [
  ["9-J", 385],
  ["9-H", 399],
  ["9-H", 425],
  ["9-G", 491],
  ["9-F", 603],
  ["9-E", 669],
  ["9-D", 796],
  ["9-C", 935],
  ["9-B", 975],
]
const DIMS: [string, number, number][] = [
  ["1100", 575, 318],
  ["3200", 654, 318],
  ["2700", 761, 318],
  ["3600", 877, 318],
  ["1800", 975, 318],
  ["4550", 1090, 318],
  ["2800", 1224, 318],
  ["2100", 1313, 318],
  ["2200", 1392, 318],
  ["4550", 1515, 318],
  ["1800", 1631, 318],
  ["41000", 1303, 263],
]
const SIDE_DIMS: [string, number][] = [
  ["1800", 456],
  ["3100", 548],
  ["1800", 635],
  ["3300", 732],
  ["3800", 866],
  ["2200", 958],
]
const RED: Seg[] = [
  [554, 386, 554, 980],
  [594, 386, 594, 503],
  [711, 386, 711, 623],
  [809, 386, 809, 682],
  [940, 386, 940, 980],
  [1006, 387, 1006, 925],
  [1171, 387, 1171, 654],
  [1273, 387, 1273, 655],
  [1350, 387, 1350, 655],
  [1430, 387, 1430, 880],
  [1596, 387, 1596, 658],
  [1661, 387, 1661, 980],
  [616, 719, 616, 980],
  [689, 783, 689, 980],
  [809, 786, 809, 980],
  [991, 890, 991, 980],
  [1111, 684, 1111, 980],
  [1242, 824, 1242, 980],
  [1301, 683, 1301, 980],
  [1359, 823, 1359, 980],
  [1490, 684, 1490, 980],
  [1610, 897, 1610, 980],
  [642, 644, 642, 758, 2],
  [842, 656, 842, 753, 1],
  [1069, 685, 1069, 858, 2],
  [1534, 813, 1534, 859, 2],
  [554, 386, 976, 386],
  [1607, 386, 1698, 386],
  [505, 399, 724, 399, 2],
  [925, 425, 1039, 425],
  [1563, 425, 1676, 425],
  [1134, 462, 1457, 462, 1],
  [554, 491, 678, 491],
  [1335, 542, 1448, 542, 1],
  [554, 603, 1194, 603],
  [1411, 603, 1609, 603, 1],
  [1648, 603, 1698, 603, 1],
  [1152, 643, 1454, 643, 1],
  [554, 669, 877, 669],
  [987, 698, 1500, 698, 1],
  [818, 716, 984, 716, 2],
  [1628, 716, 1677, 716, 1],
  [481, 735, 655, 735, 2],
  [554, 796, 830, 796],
  [481, 831, 698, 831, 2],
  [972, 846, 1627, 846, 2],
  [918, 904, 1310, 904, 2],
  [584, 935, 841, 935],
  [554, 979, 972, 979],
]
const GREENS: Seg[] = [
  [554, 276, 1698, 276],
  [554, 331, 1698, 331],
  [499, 386, 499, 988],
  ...[386, 425, 491, 603, 669, 796].map((y): Seg => [505, y, 554, y]),
  [507, 935, 536, 935],
  [507, 979, 543, 979],
  ...TOP.map(([, x]): Seg => [x, 222, x, 387]),
]

function polygon(cx: number, cy: number, r: number) {
  const pts: string[] = []
  for (let i = 0; i < 12; i++) {
    const a = (i * Math.PI) / 6
    pts.push(`${(cx + r * Math.sin(a)).toFixed(1)},${(cy - r * Math.cos(a)).toFixed(1)}`)
  }
  return pts.join(" ")
}

function Bubble({ label, x, y, side }: { label: string; x: number; y: number; side?: boolean }) {
  return (
    <g>
      <polygon points={polygon(x, y, 13)} fill="none" stroke={GREEN} />
      {side && <path d={`M${x - 8} ${y - 10}L${x + 14} ${y + 10}`} stroke={GREEN} />}
      <text x={x} y={y + 6} textAnchor="middle" fontSize="15" letterSpacing="1.5" fill="#dcdcdc" fontFamily="Liberation Sans">
        {label}
      </text>
    </g>
  )
}

function CadCanvas() {
  const line = (s: Seg, color: string, i: number) => {
    const horizontal = s[1] === s[3]
    return <line key={i} x1={s[0]} x2={s[2]} y1={horizontal ? s[1] + 0.5 : s[1]} y2={horizontal ? s[3] + 0.5 : s[3]} transform={horizontal ? undefined : "translate(.5 0)"} stroke={color} shapeRendering="crispEdges" />
  }
  return (
    <div className="min-h-0 flex-1 bg-black">
      <svg width="100%" height="100%" viewBox="481 165 1217 823" preserveAspectRatio="none" className="block">
        {SIDE_DIMS.map(([t, y]) => (
          <text key={y} transform={`translate(487 ${y}) rotate(-90)`} textAnchor="middle" fontSize="15" fill="#c9c9c9" fontFamily="Liberation Sans">
            {t}
          </text>
        ))}
        {GREENS.map((s, i) => line(s, GREEN, i))}
        {RED.map((s, i) => line(s, shades[s[4] ?? 0], i + 100))}
        {[...TOP.map(([, x]) => x)].map((x) => (
          <path key={x} d={`M${x - 7} 338L${x + 7} 324`} stroke={GREEN} />
        ))}
        <path d="M547 283L561 269" stroke={GREEN} />
        {TOP.map(([l, x]) => (
          <Bubble key={x} label={l} x={x} y={208} />
        ))}
        {BOTTOM.map(([l, x]) => (
          <Bubble key={x} label={l} x={x} y={975} />
        ))}
        {LEFT.map(([l, y]) => (
          <Bubble key={y} label={l} x={494} y={y} side />
        ))}
        {DIMS.map(([t, x, y], i) => (
          <text key={i} x={x} y={y} textAnchor="middle" fontSize="16" letterSpacing="-.4" fill="#cfcfcf" fontFamily="Liberation Sans">
            {t}
          </text>
        ))}
        <path d="M536 890l3.5 10h-2v37h-3v-37h-2z" fill="#00ff00" />
        <path d="M536 936h35v-3l14 4-14 4v-3h-35z" fill="#ff0000" />
        <path d="M545 891l4 5 4-5M549 896v6" stroke="#00ff00" fill="none" />
        <path d="M573 917l9 10M582 917l-9 10" stroke="#ff0000" fill="none" />
        <path d="M1640 979.5h55" stroke="#888" />
      </svg>
    </div>
  )
}

/* ---------- snap toolbar ---------- */
function Spin({ w, value }: { w: string; value: string }) {
  return (
    <div className={`flex h-[21px] ${w} items-center justify-end border border-[#fff] bg-[#f0f0f0] pr-[2px] text-[#9a9a9a]`}>
      <span>{value}</span>
      <span className="ml-[3px] flex flex-col gap-[4px]">
        <span className="inline-block border-x-[3px] border-b-[4px] border-x-transparent border-b-[#aaa]" />
        <Caret color="border-t-[#aaa]" />
      </span>
    </div>
  )
}

function SnapBtn({ icon, label, on, w }: { icon: ReactNode; label: string; on?: boolean; w: string }) {
  return (
    <div className={`flex h-[24px] ${w} shrink-0 items-center gap-[4px] pl-[3px] text-black ${on ? "border-x border-t border-[#b5b5b5] bg-white" : ""}`}>
      {icon}
      <span className="whitespace-nowrap">{label}</span>
    </div>
  )
}

const ISnapOrtho = (
  <Ic>
    <path d="M1 2h14v3H1zM5 5h3v11H5z" fill="#d9a5a5" />
    <path d="M10 7l5 6-3-1-1 3z" fill="#cfe0f2" stroke="#556" strokeWidth=".6" />
  </Ic>
)
const ISnapObj = (
  <Ic>
    <path d="M2 1v7M12 1v7M1 7h12" stroke="#7a2020" />
    <circle cx="2" cy="7" r="1.5" fill="#7a2020" />
    <path d="M6 9l7-1 2 3-2 4H6z" fill="#e4b955" />
  </Ic>
)
const ISnapInput = (
  <Ic>
    <path d="M1 2h14M1 5h14" stroke="#a05050" />
    <rect x="2" y="8" width="12" height="7" fill="#fff" stroke="#333" />
    <path d="M5 10v3M8 10h2v1.5H8V13h2" stroke="#333" strokeWidth=".8" />
  </Ic>
)
const ISnapCross = (
  <Ic>
    <path d="M1 1l14 14M15 1L1 15" stroke="#3a79c9" strokeWidth="1.4" />
  </Ic>
)
const ISnapPerp = (
  <Ic>
    <path d="M1 12h14M12 1v14" stroke="#2f74c8" />
    <rect x="10" y="10" width="4" height="4" fill="#1f4d8f" />
  </Ic>
)
const ISnapMid = (
  <Ic>
    <path d="M0 8h16" stroke="#7fa4d6" />
    <rect x="5" y="5.5" width="6" height="5" fill="#1d3f8a" />
  </Ic>
)
const ISnapApex = (
  <Ic>
    <path d="M8 1l6.5 5-2.5 9H4L1.5 6z" fill="#fff" stroke="#2f74c8" strokeWidth="1.4" />
    <rect x="4" y="13" width="8" height="2.5" fill="#2f74c8" />
  </Ic>
)
const ISnapCoord = (
  <Ic>
    <path d="M5 15V2M1 11h14M5 11l7-8" stroke="#2f74c8" />
    <path d="M1 3v2M1 8v1M12 1v2M15 13v2M8 14v1" stroke="#2f74c8" strokeWidth="1.4" />
  </Ic>
)

function VBar({ m }: { m: string }) {
  return <div className={`${m} h-[24px] w-[3px] shrink-0 border-x border-[#b5b5b5] bg-[#f4f4f4]`} />
}

function SnapBar() {
  return (
    <div className="flex h-[29px] shrink-0 text-[12px]">
      <div className="flex w-[892px] shrink-0 items-center border-r border-b-2 border-[#a0a0a0] bg-[#f0f0f0] pl-[5px]">
        <div className="mr-[3px] h-[24px] w-px bg-[#aaa]" />
        <SnapBtn icon={ISnapOrtho} label="正交" w="w-[51px]" />
        <SnapBtn icon={ISnapObj} label="对象捕捉" w="w-[74px]" on />
        <SnapBtn icon={ISnapInput} label="动态输入" w="w-[74px]" />
        <VBar m="ml-[2px] mr-[5px]" />
        <SnapBtn icon={ISnapCross} label="交点" w="w-[52px]" />
        <SnapBtn icon={ISnapPerp} label="垂点" w="w-[51px]" />
        <SnapBtn icon={ISnapMid} label="中点" w="w-[50px]" on />
        <SnapBtn icon={ISnapApex} label="顶点" w="w-[52px]" />
        <SnapBtn icon={ISnapCoord} label="坐标" w="w-[48px]" />
        <VBar m="mx-[2px]" />
        <div className="ml-[9px] flex h-[23px] w-[56px] shrink-0 items-center justify-between bg-white pl-[1px] text-black">
          <span>不偏移</span>
          <span className="flex h-full w-[10px] items-center justify-center bg-[#eee]">
            <Caret color="border-t-[#111]" />
          </span>
        </div>
        <div className="mr-[4px] ml-[2px] h-[24px] w-px shrink-0 bg-[#aaa]" />
        <span className="font-['Liberation_Sans'] text-[#aaa]">X=</span>
        <div className="ml-[4px]">
          <Spin w="w-[48px]" value="0" />
        </div>
        <span className="ml-[11px] font-['Liberation_Sans'] text-[#aaa]">mm</span>
        <span className="ml-[9px] font-['Liberation_Sans'] text-[#aaa]">Y=</span>
        <div className="ml-[3px]">
          <Spin w="w-[48px]" value="0" />
        </div>
        <span className="ml-[10px] font-['Liberation_Sans'] text-[#aaa]">mm</span>
        <div className="mr-[4px] ml-[2px] h-[24px] w-px shrink-0 bg-[#aaa]" />
        <span className="h-[12px] w-[12px] shrink-0 border border-[#777] bg-white" />
        <span className="ml-[9px] text-black">旋转</span>
        <div className="ml-[9px]">
          <Spin w="w-[66px]" value="0.000" />
        </div>
        <span className="ml-[4px] font-['Liberation_Sans'] text-[#aaa]">°</span>
      </div>
    </div>
  )
}

function SideTabs() {
  const Notch = ({ className = "" }: { className?: string }) => (
    <svg width="13" height="9" viewBox="0 0 13 9" fill="none" className={`shrink-0 ${className}`}>
      <path d="M0 8L6 1l7 6" stroke="#999" />
    </svg>
  )
  const Label = ({ text, bold }: { text: string; bold?: boolean }) => (
    <div className={`w-[12px] text-[12px] leading-4 text-black ${bold ? "font-bold" : "font-medium"}`}>
      {[...text].map((c, i) => (
        <div key={i}>{c}</div>
      ))}
    </div>
  )
  return (
    <div className="flex h-full w-[16px] shrink-0 border-r-[3px] border-[#8f8f8f] bg-[#f0f0f0]">
      <div className="flex w-[13px] flex-col overflow-hidden pt-[6px]">
        <Notch />
        <div className="h-[5px] shrink-0" />
        <Label text="工程设置" />
        <div className="h-[4px] shrink-0" />
        <Notch />
        <div className="flex h-[96px] shrink-0 flex-col rounded-r-[6px] bg-[#a9c9ee] pt-[11px]">
          <Label text="绘图输入" bold />
        </div>
        <Notch className="-mb-[4px]" />
        <Label text="单构件输入" />
        <div className="h-[22px] shrink-0" />
        <Label text="翻样明细" />
        <div className="h-[8px] shrink-0" />
        <Notch />
        <div className="h-[11px] shrink-0" />
        <Label text="报表输出" />
        <div className="h-[2px] shrink-0" />
        <Notch />
      </div>
    </div>
  )
}

function StatusCell({ w, children }: { w: string; children: ReactNode }) {
  return <div className={`flex h-full ${w} shrink-0 items-center overflow-hidden border-r-2 border-[#c9c9c9] pl-[2px] text-black`}>{children}</div>
}

function FloatBar() {
  const sel = (w: string, t: string) => (
    <div className={`flex h-[20px] ${w} shrink-0 items-center justify-between bg-white pl-[2px] font-['Liberation_Sans','Noto_Sans_CJK_SC',sans-serif] text-[12px] text-black`}>
      <span className="whitespace-nowrap">{t}</span>
      <span className="flex h-full w-[9px] items-center justify-center bg-[#eeeeee]">
        <Caret color="border-t-[#111]" />
      </span>
    </div>
  )
  return (
    <div className="absolute top-[10px] left-[713px] h-[43px] w-[300px] border border-[#8d8d8d] bg-[#d9e6f3] p-[2px]">
      <div className="h-[12px] bg-gradient-to-r from-[#9ab3d0] to-[#c0d6ee]" />
      <div className="-mt-[1px] ml-[4px] flex h-[24px] w-[290px] items-center gap-[4px] border-x border-b border-[#7d99b8] pl-[6px]">
        {sel("w-[56px]", "第-1层")}
        {sel("w-[68px]", "CAD识别")}
        {sel("w-[68px]", "识别柱")}
        {sel("w-[68px]", "GJZ29")}
      </div>
    </div>
  )
}

export default function App() {
  return (
    <div className="relative flex h-screen w-full flex-col overflow-hidden bg-white font-['Noto_Sans_CJK_SC','Liberation_Sans',sans-serif] text-[12px]">
      <TitleBar />
      <Tabs />
      <Ribbon />
      <div className="h-[5px] shrink-0 bg-[#ccd9e8]" />
      <div className="flex h-[852px] shrink-0 bg-[#f0f0f0]">
        <SideTabs />
        <TreePanel />
        <div className="flex h-full w-[3px] shrink-0" />
        <div className="flex h-full w-[259px] shrink-0 flex-col">
          <ComponentList />
          <DrawingManager />
        </div>
        <div className="w-[3px] shrink-0" />
        <div className="flex min-w-0 flex-1 flex-col bg-white">
          <CadCanvas />
          <SnapBar />
        </div>
      </div>
      <div className="h-[3px] shrink-0 bg-white" />
      <div className="flex h-[20px] shrink-0 items-center border-t border-[#a8a8a8] bg-[#efefef]">
        <StatusCell w="w-[143px]">
          <span className="whitespace-nowrap">
            <Sim text="=891 Y=13830" />
          </span>
        </StatusCell>
        <StatusCell w="w-[81px]">
          <Sim text="层高:4.96m" />
        </StatusCell>
        <StatusCell w="w-[100px]">
          <Sim text="底标高:-12.4m" />
        </StatusCell>
        <StatusCell w="w-[50px]">
          <Sim text="0" />
        </StatusCell>
        <div className="pl-[2px] whitespace-nowrap text-black">按鼠标左键指定第一个角点，或拾取构件图元</div>
      </div>
      <div className="flex h-[5px] shrink-0 border-t border-[#5d7e9e] bg-[#0f3556]">
        <div className="ml-[534px] h-full w-[48px] bg-[#2a6099]" />
      </div>
      <FloatBar />
    </div>
  )
}
